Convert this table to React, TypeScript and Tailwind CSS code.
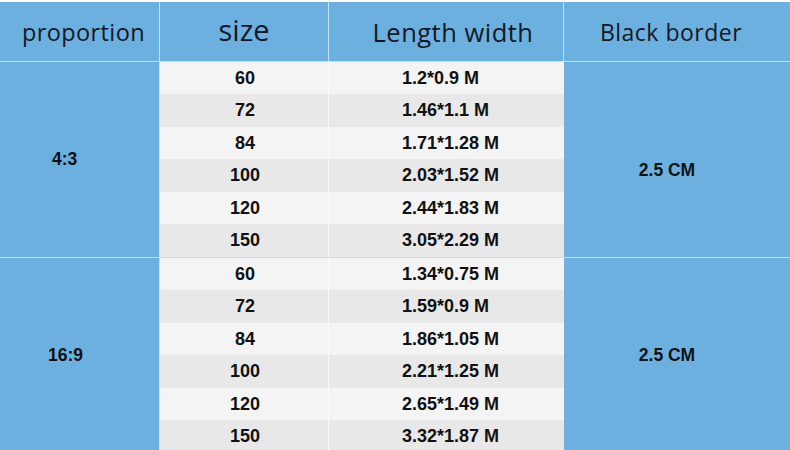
const groups = [
  {
    ratio: '4:3',
    ratioPad: 'pl-[52px]',
    border: '2.5 CM',
    rows: [
      ['60', '1.2*0.9 M'],
      ['72', '1.46*1.1 M'],
      ['84', '1.71*1.28 M'],
      ['100', '2.03*1.52 M'],
      ['120', '2.44*1.83 M'],
      ['150', '3.05*2.29 M'],
    ],
  },
  {
    ratio: '16:9',
    ratioPad: 'pl-[48px]',
    border: '2.5 CM',
    rows: [
      ['60', '1.34*0.75 M'],
      ['72', '1.59*0.9 M'],
      ['84', '1.86*1.05 M'],
      ['100', '2.21*1.25 M'],
      ['120', '2.65*1.49 M'],
      ['150', '3.32*1.87 M'],
    ],
  },
];

const ROW_HEIGHTS = ['h-[32px]', 'h-[33px]', 'h-[32px]', 'h-[33px]', 'h-[32px]', 'h-[33px]'];

export default function App() {
  return (
    <div className="w-[790px] h-[450px] overflow-hidden bg-white pt-[2px] font-['Liberation_Sans',Arial,sans-serif]">
      {/* header */}
      <div className="flex h-[60px] bg-[#6cb0e0] border-b border-[#c4e0f4] text-[#141826] font-['Open_Sans','Noto_Sans',sans-serif]">
        <div className="w-[160px] border-r border-[#c4e0f4] flex items-center justify-center pt-[2px] text-[23.5px] tracking-[0.4px] pl-[8px]">
          proportion
        </div>
        <div className="w-[169px] border-r border-[#c4e0f4] flex items-center justify-center pb-[4px] text-[29px]">
          size
        </div>
        <div className="w-[235px] border-r border-[#c4e0f4] flex items-center justify-center pt-[2px] text-[25.5px] tracking-[0.5px] pl-[14px]">
          Length width
        </div>
        <div className="flex-1 flex items-center justify-center pt-[2px] text-[23px] tracking-[0.5px] pr-[12px]">
          Black border
        </div>
      </div>

      {groups.map((g, gi) => (
        <div key={g.ratio} className={`flex ${gi === 0 ? 'border-b border-[#c4e0f4]' : ''}`}>
          <div
            className={`w-[160px] border-r border-[#c4e0f4] bg-[#6cb0e0] flex items-center ${g.ratioPad} text-[17.5px] font-bold text-[#111]`}
          >
            {g.ratio}
          </div>
          <div className="w-[404px] flex flex-col">
            {g.rows.map(([size, dims], i) => (
              <div
                key={size}
                className={`flex ${ROW_HEIGHTS[i]} ${i % 2 === 0 ? 'bg-[#f4f4f4]' : 'bg-[#e8e8e8]'} text-[18px] font-bold text-[#111]`}
              >
                <div className="w-[169px] border-r border-[#f9f9f9] flex items-center justify-center pl-[2px]">
                  {size}
                </div>
                <div className="flex-1 flex items-center pl-[73px]">{dims}</div>
              </div>
            ))}
          </div>
          <div
            className={`flex-1 bg-[#6cb0e0] flex items-center justify-center pr-[20px] ${gi === 0 ? 'pt-[22px]' : ''} text-[17.5px] font-bold text-[#111]`}
          >
            {g.border}
          </div>
        </div>
      ))}
    </div>
  );
}
